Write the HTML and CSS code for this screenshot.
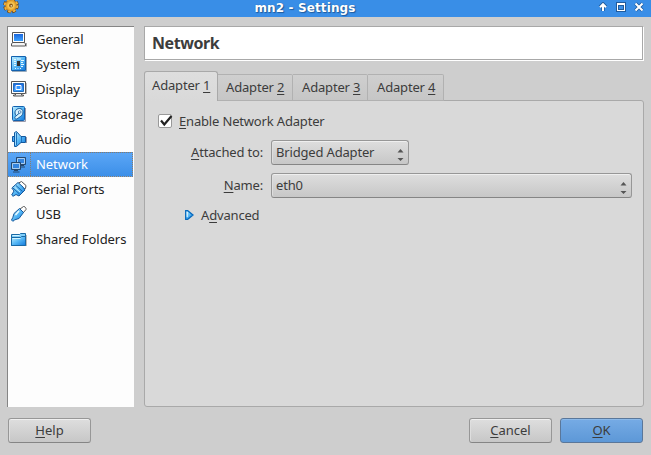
FILE: index.html
```html
<!DOCTYPE html>
<html lang="en">
<head>
<meta charset="utf-8">
<title>mn2 - Settings</title>
<link rel="stylesheet" href="styles.css">
</head>
<body>
<svg width="0" height="0" class="defs">
  <defs>
    <linearGradient id="blue" x1="0" y1="0" x2="1" y2="1"><stop offset="0" stop-color="#c3f0ff"/><stop offset=".5" stop-color="#55b7f5"/><stop offset="1" stop-color="#1278dc"/></linearGradient>
    <linearGradient id="screen" x1="0" y1="0" x2="0" y2="1"><stop offset="0" stop-color="#1b66dc"/><stop offset="1" stop-color="#3ba2ff"/></linearGradient>
    <radialGradient id="gold"><stop offset="0" stop-color="#fff0a0"/><stop offset=".6" stop-color="#f3b73c"/><stop offset="1" stop-color="#c98420"/></radialGradient>
  </defs>
</svg>
<header class="titlebar">
  <svg class="gear" width="16" height="14" viewBox="0 0 16 14">
    <circle cx="8" cy="5.500" r="6.400" fill="none" stroke="#6b4211" stroke-width="2.800" stroke-dasharray="3.400 1.630"/>
    <circle cx="8" cy="5.500" r="6" fill="url(#gold)" stroke="#8b5714" stroke-width=".5"/>
    <circle cx="8" cy="5.500" r="6.300" fill="none" stroke="#efb443" stroke-width="1.800" stroke-dasharray="2.600 2.350"/>
    <circle cx="8" cy="5.500" r="1.900" fill="#8c5712"/>
    <circle cx="8.300" cy="5.800" r=".9" fill="#e8d9b0"/>
  </svg>
  <h1>mn2 - Settings</h1>
  <div class="controls">
    <svg width="10" height="10" viewBox="0 0 10 10"><path d="M5 9V3M2 5l3-3 3 3" class="halo"/><path d="M5 9V3M2 5.200l3-3 3 3" class="mark"/></svg>
    <svg width="10" height="10" viewBox="0 0 10 10"><path d="M0 0h10v10H0z" fill="#205b9c"/><path d="M1 1h8v8H1z" fill="#fff"/><path d="M2 3h6v5H2z" fill="#205b9c"/><path d="M3 4h4v3H3z" fill="#398ee7"/></svg>
    <svg width="10" height="10" viewBox="0 0 10 10"><path d="M1.500 1.500l7 7M8.500 1.500l-7 7" class="halo"/><path d="M1.500 1.500l7 7M8.500 1.500l-7 7" class="mark"/></svg>
  </div>
</header>
<main>
  <nav>
    <a><svg viewBox="0 0 16 16"><path d="M1.500 1.500h12v10h-12z" fill="#fff" stroke="#555"/><path d="M3 3h9v7H3z" fill="url(#screen)"/><path d="M1.500 11.500h12l1 1.500v2H.5v-2z" fill="#f5f5f5" stroke="#555"/><path d="M15.500 12v3.500" fill="none" stroke="#aaa"/></svg>General</a>
    <a><svg viewBox="0 0 16 16"><path d="M.5.500h14v14H.5z" fill="url(#blue)" stroke="#1261ae"/><path d="M3 3.500h2M3 5.500h2M3 7.500h2M3 9.500h2M10 4.500h3M10 6.500h2M10 8.500h3M10 10.500h2M4.500 12v1M7 12v1M9.500 12v1M7 2v2M9 2v2" stroke="#e4f8ff"/><path d="M6 5h3v5H6z" fill="#333"/><path d="M1 15.500h14.500V1" fill="none" stroke="#9ab"/></svg>System</a>
    <a><svg viewBox="0 0 16 16"><path d="M.5.500h14v12H.5z" fill="#fff" stroke="#555"/><path d="M2.500 2.500h10v8h-10z" fill="url(#screen)" stroke="#236cbb"/><path d="M5 4.500h5v4H5z" fill="#3294ff" stroke="#fff"/><path d="M4.500 12.500h6V14h2v1h-10v-1h2z" fill="#eee" stroke="#555"/><path d="M15.500 2v11" stroke="#bbb"/></svg>Display</a>
    <a><svg viewBox="0 0 16 16"><rect x="1.500" y=".5" width="12" height="14" rx="1" fill="url(#blue)" stroke="#1261ae"/><path d="M5 9.500C2.500 6 5 2.500 8.500 2.500c4.500 0 4.500 6 1 8L6 13c-2.500.5-3-2-1-3l4-3.500" fill="#d6f3ff" stroke="#17599b"/><circle cx="8.700" cy="6" r="1.300" fill="#fff" stroke="#17599b" stroke-width=".7"/><path d="M2 15.500h12.500V2" fill="none" stroke="#99a"/></svg>Storage</a>
    <a><svg viewBox="0 0 16 16"><path d="M1.500 5.500H4v5H1.500z" fill="#4aafff" stroke="#12589e"/><path d="M3.500 1.500l2-1 4.500 5h4.500v6H10l-4.500 4h-2z" fill="url(#blue)" stroke="#12589e"/><path d="M5.500 1.500v13M10.500 6v5" stroke="#1d6fbb"/><path d="M4.500 2v12" stroke="#9bdcff"/><path d="M15.500 6v6" stroke="#99a"/></svg>Audio</a>
    <a class="selected"><svg viewBox="0 0 16 16"><path d="M5.500.500h9v7h-9z" fill="#3484df" stroke="#25486f"/><path d="M6.500 1.500h7v5h-7z" fill="none" stroke="#a9cdef"/><path d="M9 8.500h4M8 10h6" stroke="#25486f"/><path d="M.5 5.500h9v7h-9z" fill="#3484df" stroke="#25486f"/><path d="M1.500 6.500h7v5h-7z" fill="none" stroke="#a9cdef"/><path d="M3 13.500h4M2 15h6.500" stroke="#25486f"/></svg><span>Network</span></a>
    <a><svg viewBox="0 0 16 16"><path d="M7.500 2l3-1.500 4.500 4-.5 3L11 8z" fill="#fff" stroke="#555"/><path d="M7 1.500L.8 7 3 10l-2.300 4L2 15.300l3-1.800 3 1.500 6-6-2-3z" fill="url(#blue)" stroke="#15599d"/><path d="M2 7l6.500 6M5 4.500l6.500 6" stroke="#1863a8"/><path d="M4 6.500l5 4.500" stroke="#c9f0ff"/></svg>Serial Ports</a>
    <a><svg viewBox="0 0 16 16"><path d="M9 3l3.500-2.500h1l1.500 2v1L12 7z" fill="#fff" stroke="#555"/><path d="M8.500 2.500L3 7.500l-1.200 4L.5 14l1.300 1.300 2-1.500L8 12.500l4.500-6z" fill="url(#blue)" stroke="#15599d"/><path d="M8 5l-3.500 4" stroke="#e8faff" stroke-width="1.500"/></svg>USB</a>
    <a><svg viewBox="0 0 16 16"><path d="M.5 3.500h8l1-1h5v12H.5z" fill="#7fcdf8" stroke="#1769a6"/><path d="M.5 6.500h9l1-1h4v9H.5z" fill="url(#blue)" stroke="#1769a6"/><path d="M1.500 4.500h7M1.500 7.500h8" stroke="#d4f5ff"/><path d="M15.500 4v11" stroke="#bbb"/></svg>Shared Folders</a>
  </nav>
  <section class="content">
    <h2>Network</h2>
    <div class="tabs">
      <div class="tab active">Adapter <u>1</u></div>
      <div class="tab">Adapter <u>2</u></div>
      <div class="tab">Adapter <u>3</u></div>
      <div class="tab">Adapter <u>4</u></div>
    </div>
    <div class="pane">
      <div class="enable"><span class="check"><svg width="16" height="14" viewBox="0 0 16 14"><path d="M3 6.500l3.300 4L13.500 2" fill="none" stroke="#222" stroke-width="2.200"/></svg></span><span><u>E</u>nable Network Adapter</span></div>
      <div class="fields">
        <label><u>A</u>ttached to:</label>
        <div class="combo short">Bridged Adapter<svg width="7" height="12" viewBox="0 0 7 12"><path d="M.5 3.500L3.500 0l3 3.500zM.5 9L3.500 12l3-3z" fill="#555"/></svg></div>
        <label><u>N</u>ame:</label>
        <div class="combo">eth0<svg width="7" height="12" viewBox="0 0 7 12"><path d="M.5 3.500L3.500 0l3 3.500zM.5 9L3.500 12l3-3z" fill="#555"/></svg></div>
      </div>
      <div class="advanced"><svg width="9" height="10" viewBox="0 0 9 10"><path d="M.7.700h2L8 5 2.700 9.300h-2z" fill="url(#blue)" stroke="#0869bd" stroke-width="1.300"/><path d="M2.200 2v5" stroke="#f0fcff"/></svg><span>A<u>d</u>vanced</span></div>
    </div>
  </section>
</main>
<footer>
  <button class="help"><u>H</u>elp</button>
  <button><u>C</u>ancel</button>
  <button class="primary"><u>O</u>K</button>
</footer>
</body>
</html>
```
FILE: styles.css
```css
* { box-sizing: border-box; }
body {
  margin: 0;
  width: 651px;
  height: 455px;
  overflow: hidden;
  display: flex;
  flex-direction: column;
  background: #cecece;
  color: #3c3c3c;
  font: 13px/18px "Noto Sans", "Open Sans", sans-serif;
}
.defs { position: absolute; }
u { text-decoration: underline; text-decoration-thickness: 1px; text-underline-offset: 2px; text-decoration-skip-ink: none; }
.titlebar {
  flex: none;
  height: 17px;
  background: #398ee7;
  display: grid;
  grid-template-columns: 50px 1fr 50px;
  padding: 0 7px 0 3px;
}
.gear { display: block; }
h1 {
  margin: 0;
  padding-right: 37px;
  text-align: center;
  color: #fff;
  font: bold 12px/17px "DejaVu Sans", sans-serif;
  letter-spacing: .12px;
  text-shadow: 1px 1px 1px #205b9c, 0 0 1px #205b9c;
}
.controls { display: flex; justify-content: flex-end; gap: 8px; padding-top: 2px; }
.controls svg { flex: none; }
.halo { fill: none; stroke: #205b9c; stroke-width: 3.6; }
.mark { fill: none; stroke: #fff; stroke-width: 2; }
main { flex: none; height: 390px; display: flex; gap: 10px; padding: 9px 7px 0; }
nav {
  width: 127px;
  height: 381px;
  border-top: 1px solid #858585;
  border-left: 1px solid #858585;
  background: #fdfdfd;
  color: #222;
  letter-spacing: -.06px;
}
nav a { display: flex; align-items: center; height: 25px; padding: 0 0 2px 3px; gap: 9px; white-space: nowrap; }
nav svg { width: 16px; height: 16px; flex: none; }
.selected {
  width: 125px;
  padding-bottom: 0;
  color: #fff;
  background: linear-gradient(#5ba6f6, #3c8fe8);
  border: 1px dotted #8d7d69;
  border-left: 0;
}
.selected span { height: 23px; line-height: 23px; border-left: 1px dotted #8d7d69; margin-left: -6px; padding-left: 5px; }
.content { width: 500px; display: flex; flex-direction: column; letter-spacing: -.17px; }
h2 {
  margin: 0;
  height: 34px;
  padding-left: 7px;
  border: 1px solid #a8a8a8;
  box-shadow: 1px 1px #fff;
  width: 499px;
  background: #fff;
  font: bold 16px/32px "Noto Sans", sans-serif;
  letter-spacing: -.42px;
}
.tabs { display: flex; align-items: flex-end; height: 30px; margin-top: 11px; position: relative; }
.tab {
  width: 75px;
  height: 27px;
  line-height: 24px;
  padding-left: 8px;
  border: 1px solid #b1b1b1;
  border-left: 0;
  border-radius: 0 2px 0 0;
  background: linear-gradient(#cfcfcf, #c6c6c6);
}
.tab:nth-child(n+3) { padding-left: 9px; }
.tab:last-child { width: 76px; }
.tab.active {
  width: 74px;
  height: 30px;
  line-height: 27px;
  padding-left: 7px;
  border: 1px solid #a9a9a9;
  border-bottom: 0;
  border-radius: 3px 3px 0 0;
  background: linear-gradient(#dedede, #d9d9d9);
}
.pane {
  height: 307px;
  margin-top: -1px;
  border: 1px solid #a9a9a9;
  border-radius: 0 3px 3px 3px;
  background: #d9d9d9;
  padding: 11px 11px 0 13px;
}
.enable { display: flex; align-items: center; height: 18px; gap: 7px; }
.check { width: 14px; height: 14px; border: 1px solid #999; border-radius: 2px; background: #fff; }
.check svg { display: block; margin: -1px 0 0 -1px; overflow: visible; }
.fields { display: grid; grid-template-columns: 105px 361px; column-gap: 8px; row-gap: 8px; margin-top: 10px; }
label { text-align: right; line-height: 24px; }
.combo, button {
  height: 25px;
  border: 1px solid #979797;
  border-bottom-color: #858585;
  border-radius: 3px;
  background: linear-gradient(#dedede, #c7c7c7);
  box-shadow: inset 0 1px #efefef, inset 1px 0 #dedede;
}
.combo { display: flex; justify-content: space-between; padding: 0 4px; line-height: 22px; }
.combo svg { margin-top: 8px; }
.short { width: 138px; }
.advanced { display: flex; align-items: center; gap: 7px; height: 18px; margin: 8px 0 0 27px; }
footer { display: flex; padding: 11px 8px 0; gap: 8px; }
button { width: 83px; padding: 0 0 2px; color: #3c3c3c; font: 13px/20px "Noto Sans", sans-serif; }
.help { margin-right: auto; }
.primary { background: linear-gradient(#76abe5, #5d98d7); border-color: #5a779a; box-shadow: inset 0 1px #8bb9e9; }
```
